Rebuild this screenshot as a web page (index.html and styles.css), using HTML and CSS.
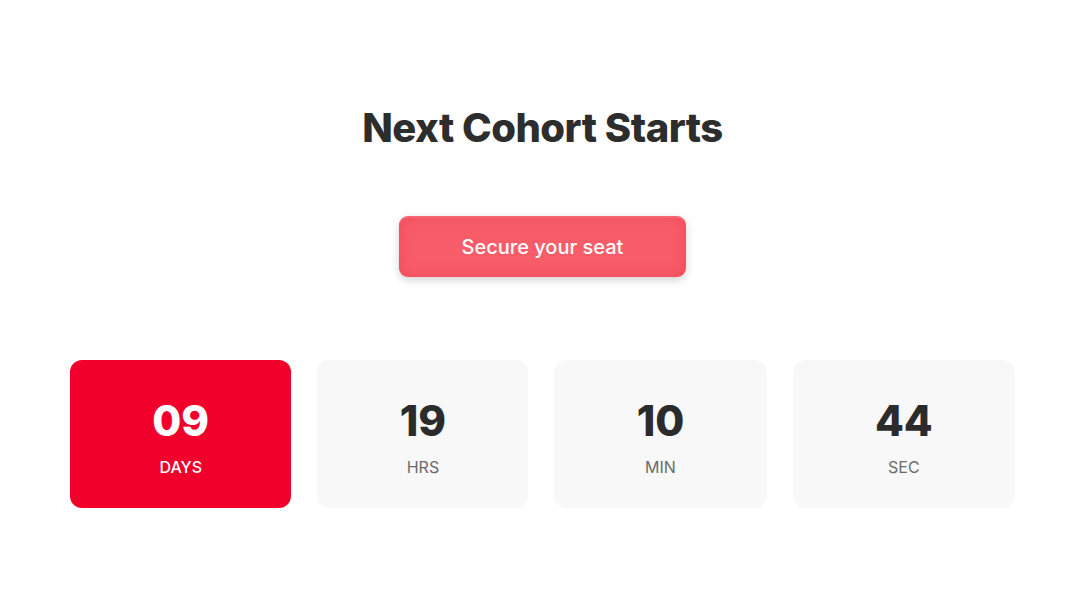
FILE: index.html
```html
<!DOCTYPE html>
<html lang="en">

<head>
    <meta charset="UTF-8">
    <meta name="viewport" content="width=device-width, initial-scale=1.0">
    <title>Countdown</title>

    <link rel="stylesheet" href="styles.css">
</head>

<body>
    <main class="page">
        <h1 class="title">Next Cohort Starts</h1>

        <button class="cta">Secure your seat</button>

        <div class="timer">
            <div class="unit unit-active">
                <span class="value">09</span>
                <span class="label">DAYS</span>
            </div>
            <div class="unit">
                <span class="value">19</span>
                <span class="label">HRS</span>
            </div>
            <div class="unit">
                <span class="value">10</span>
                <span class="label">MIN</span>
            </div>
            <div class="unit">
                <span class="value">44</span>
                <span class="label">SEC</span>
            </div>
        </div>
    </main>
</body>

</html>
```

FILE: styles.css
```css
body {
    margin: 0;
    background-color: #ffffff;
    font-family: Inter, 'Liberation Sans', sans-serif;
    color: #2b2b2b;
}

.page {
    display: flex;
    flex-direction: column;
    align-items: center;
    padding: 104px 51px 0 70px;
}

.title {
    margin: 0;
    font-size: 40px;
    font-weight: 800;
    letter-spacing: -0.5px;
    line-height: 48px;
    color: #2d2d2d;
}

.cta {
    margin-top: 64px;
    width: 287px;
    height: 61px;
    border: none;
    border-radius: 9px;
    background-color: #f75c69;
    box-shadow: inset 0 2px 0 rgba(255, 255, 255, 0.12), inset 0 0 14px rgba(230, 40, 60, 0.35), 0 3px 8px rgba(0, 0, 0, 0.18);
    color: #ffffff;
    font-family: Inter, 'Liberation Sans', sans-serif;
    font-size: 20px;
    font-weight: 500;
}

.timer {
    display: flex;
    gap: 26px;
    width: 100%;
    margin-top: 83px;
}

.unit {
    flex: 1 1 auto;
    display: flex;
    flex-direction: column;
    align-items: center;
    height: 148px;
    box-sizing: border-box;
    padding-top: 36px;
    border-radius: 12px;
    background-color: #f8f8f8;
}

.unit-active {
    background-color: #f0002a;
}

.value {
    font-size: 42px;
    font-weight: 800;
    line-height: 50px;
    color: #2b2b2b;
}

.label {
    margin-top: 11px;
    font-size: 16px;
    font-weight: 400;
    line-height: 20px;
    color: #6b6b6b;
}

.unit-active .value,
.unit-active .label {
    color: #ffffff;
}

.unit-active .label {
    font-weight: 500;
}
```
